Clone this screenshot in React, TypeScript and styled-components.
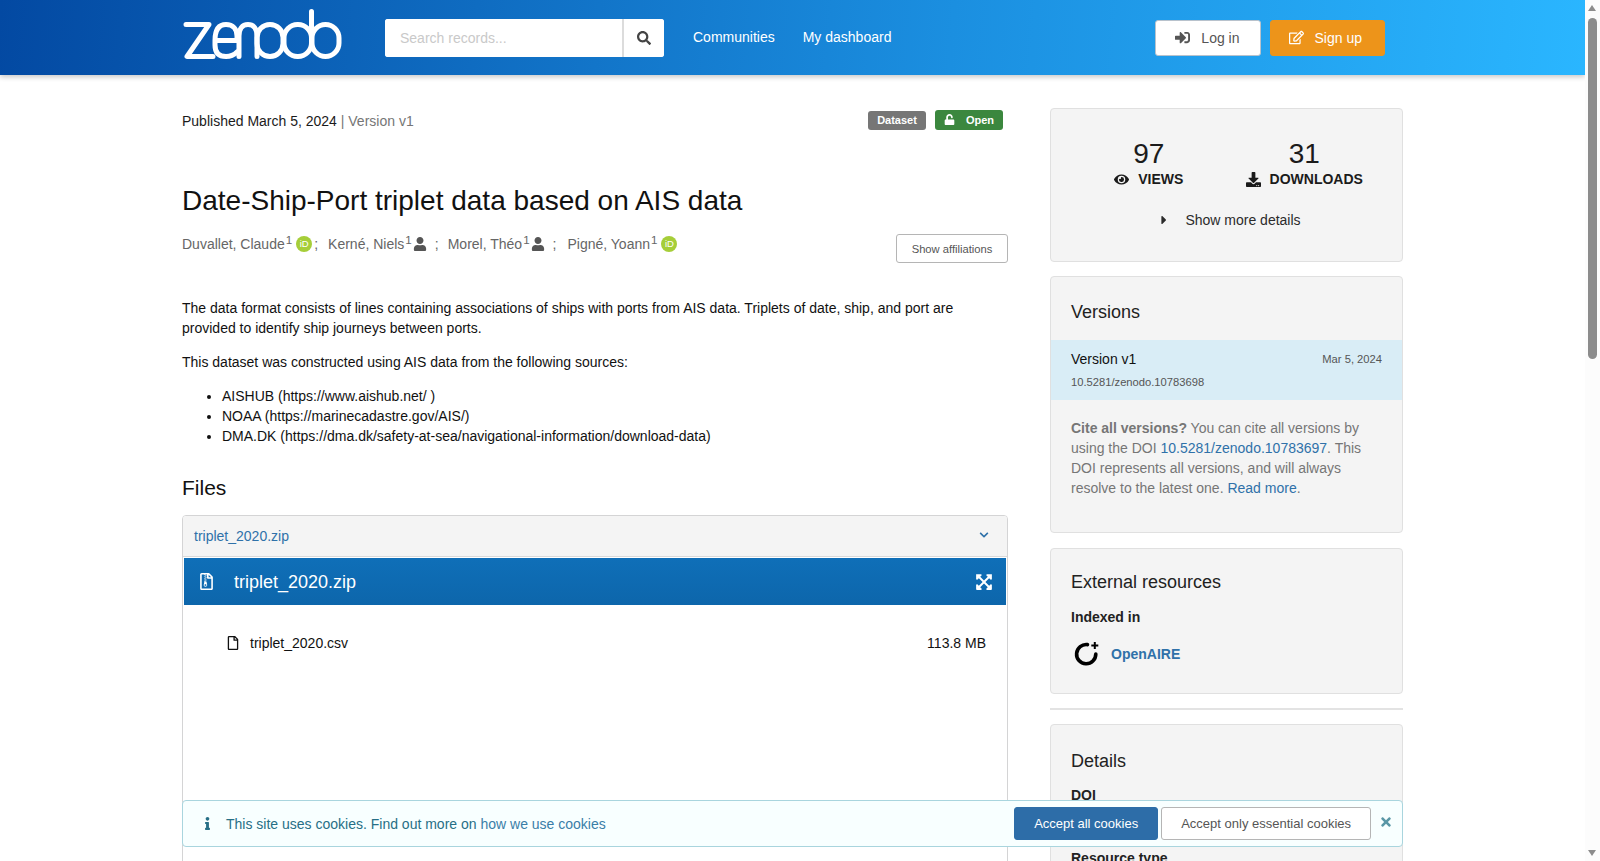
import React from "react";
import styled, { createGlobalStyle } from "styled-components";
import {
  FaCaretRight,
  FaChevronDown,
  FaDownload,
  FaExpandArrowsAlt,
  FaEye,
  FaInfo,
  FaRegEdit,
  FaRegFile,
  FaRegFileArchive,
  FaSearch,
  FaSignInAlt,
  FaTimes,
  FaUnlock,
  FaUser,
} from "react-icons/fa";

const GlobalStyle = createGlobalStyle`
  html, body {
    margin: 0;
    height: 100%;
    overflow: hidden;
    background: #fff;
  }
  body {
    font-family: "Liberation Sans", Arial, sans-serif;
    font-size: 14px;
    line-height: 20px;
    color: #1b1b1b;
  }
  * {
    box-sizing: border-box;
  }
`;

const Viewport = styled.div`
  display: flex;
  height: 861px;
  overflow: hidden;
`;

const Page = styled.div`
  position: relative;
  flex: 1;
  min-width: 0;
  height: 861px;
  overflow: hidden;
`;

const ScrollTrack = styled.div`
  position: relative;
  flex: 0 0 15px;
  display: flex;
  flex-direction: column;
  align-items: center;
  background: #fcfcfc;
`;

const ScrollThumb = styled.div`
  position: absolute;
  top: 18px;
  left: 3px;
  width: 9px;
  height: 341px;
  border-radius: 5px;
  background: #8c8c8c;
`;

const ScrollArrow = styled.div<{ $down?: boolean }>`
  position: absolute;
  left: 3px;
  ${(p) => (p.$down ? "bottom: 5px;" : "top: 5px;")}
  width: 0;
  height: 0;
  border-left: 4.5px solid transparent;
  border-right: 4.5px solid transparent;
  ${(p) =>
    p.$down ? "border-top: 6px solid #8c8c8c;" : "border-bottom: 6px solid #8c8c8c;"}
`;

const Header = styled.header`
  display: flex;
  align-items: center;
  height: 75px;
  padding: 0 200px 0 182px;
  background: linear-gradient(95deg, #0349a2 0%, #1b8fe0 60%, #2ab6ff 100%);
  box-shadow: 0 2px 5px rgba(0, 0, 0, 0.22);
`;

const Logo = styled.svg`
  display: block;
  width: 160px;
  height: 52px;
  margin-top: -6px;
  fill: none;
  stroke: #fff;
  stroke-width: 5;
  stroke-linecap: round;
  stroke-linejoin: round;
`;

const SearchBox = styled.form`
  display: flex;
  width: 279px;
  height: 38px;
  margin-left: 43px;
  border-radius: 3px;
  background: #fff;
  overflow: hidden;
`;

const SearchInput = styled.input`
  flex: 1;
  min-width: 0;
  padding: 0 15px;
  border: none;
  outline: none;
  border-right: 2px solid #dcdcdc;
  font: 14px "Liberation Sans", Arial, sans-serif;
  &::placeholder {
    color: #c9c9c9;
    opacity: 1;
  }
`;

const SearchButton = styled.button`
  display: flex;
  flex: 0 0 40px;
  align-items: center;
  justify-content: center;
  padding: 0;
  border: none;
  background: #fff;
  color: #444;
  font-size: 14px;
`;

const Nav = styled.nav`
  display: flex;
  gap: 28px;
  margin-left: 29px;
  padding-bottom: 2px;
`;

const NavLink = styled.a`
  color: #fff;
  text-decoration: none;
`;

const AuthButtons = styled.div`
  display: flex;
  gap: 9px;
  margin-left: auto;
`;

const AuthButton = styled.button<{ $primary?: boolean }>`
  display: flex;
  align-items: center;
  gap: 11px;
  height: 36px;
  padding: ${(p) => (p.$primary ? "0 22px 0 18px" : "0 20px 0 19px")};
  border: 1px solid ${(p) => (p.$primary ? "#ed941a" : "#b8c2cc")};
  border-radius: 3px;
  background: ${(p) => (p.$primary ? "#ed941a" : "#fff")};
  color: ${(p) => (p.$primary ? "#fff" : "#555")};
  font: 14px "Liberation Sans", Arial, sans-serif;
  svg {
    font-size: 15px;
  }
`;

const Container = styled.div`
  display: grid;
  grid-template-columns: 826px 353px;
  column-gap: 42px;
  padding: 33px 182px 0;
`;

const Main = styled.main`
  min-width: 0;
`;

const MetaRow = styled.div`
  display: flex;
  align-items: center;
  justify-content: space-between;
  height: 26px;
  padding-right: 5px;
`;

const Published = styled.div`
  color: #1b1b1b;
`;

const Muted = styled.span`
  color: #767676;
`;

const Badges = styled.div`
  display: flex;
  align-items: flex-end;
  gap: 9px;
  height: 21px;
  margin-top: -4px;
`;

const Badge = styled.span<{ $green?: boolean }>`
  display: inline-flex;
  align-items: center;
  gap: 11px;
  height: ${(p) => (p.$green ? "20px" : "19px")};
  padding: ${(p) => (p.$green ? "0 9px 0 9px" : "0 9px")};
  border-radius: 3px;
  background: ${(p) => (p.$green ? "#3b873e" : "#767676")};
  color: #fff;
  font-size: 11px;
  font-weight: 700;
  svg {
    font-size: 11px;
  }
`;

const Title = styled.h1`
  margin: 49px 0 15px;
  font-size: 28px;
  font-weight: 400;
  line-height: 36px;
  color: #111;
`;

const CreatorRow = styled.div`
  display: flex;
  align-items: flex-start;
  justify-content: space-between;
`;

const Creators = styled.div`
  display: flex;
  align-items: center;
  height: 20px;
  color: #666;
`;

const Sup = styled.sup`
  margin-left: 1px;
  font-size: 11.6px;
  line-height: 0;
  vertical-align: 4px;
  position: relative;
  top: -4px;
`;

const Orcid = styled.span`
  display: inline-flex;
  align-items: center;
  justify-content: center;
  width: 16px;
  height: 16px;
  margin-left: 4px;
  border-radius: 50%;
  background: #a6ce39;
  color: #fff;
  font-size: 9.5px;
  line-height: 16px;
`;

const Person = styled(FaUser)`
  margin-left: 1px;
  font-size: 14px;
  color: #555;
`;

const Separator = styled.span<{ $before: number; $after: number }>`
  margin: 0 ${(p) => p.$after}px 0 ${(p) => p.$before}px;
`;

const SmallButton = styled.button`
  height: 29px;
  width: 112px;
  padding: 0;
  border: 1px solid #b5b5b5;
  border-radius: 3px;
  background: #fff;
  color: #555;
  font: 11.2px "Liberation Sans", Arial, sans-serif;
`;

const Description = styled.div`
  margin-top: 35px;
  color: #111;
`;

const Paragraph = styled.p`
  margin: 0 0 14px;
`;

const List = styled.ul`
  margin: 0;
  padding-left: 40px;
`;

const SectionTitle = styled.h2`
  margin: 28px 0 14px;
  font-size: 21px;
  font-weight: 400;
  line-height: 27px;
  color: #111;
`;

const FilesBox = styled.section`
  height: 700px;
  border: 1px solid #d4d4d5;
  border-radius: 4px;
  overflow: hidden;
`;

const FilesHead = styled.div`
  display: flex;
  align-items: center;
  justify-content: space-between;
  height: 41px;
  padding: 0 18px 0 11px;
  border-bottom: 1px solid #d9d9d9;
  background: #f4f4f4;
`;

const Link = styled.a<{ $bold?: boolean }>`
  color: #2f71a9;
  font-weight: ${(p) => (p.$bold ? 700 : 400)};
  text-decoration: none;
`;

const Chevron = styled(FaChevronDown)`
  margin-bottom: 3px;
  font-size: 10px;
  color: #2f71a9;
`;

const PreviewBar = styled.div`
  display: flex;
  align-items: center;
  height: 47px;
  margin: 1px 1px 0;
  padding: 0 13px 0 14px;
  background: linear-gradient(#0f6fb8, #0d66ab);
  color: #fff;
  font-size: 18px;
`;

const ZipIcon = styled(FaRegFileArchive)`
  font-size: 17px;
`;

const PreviewName = styled.span`
  flex: 1;
  margin-left: 19px;
`;

const ExpandIcon = styled(FaExpandArrowsAlt)`
  font-size: 18px;
`;

const FileRow = styled.div`
  display: flex;
  align-items: center;
  justify-content: space-between;
  margin-top: 28px;
  padding: 0 21px 0 43px;
  color: #111;
`;

const FileName = styled.span`
  display: flex;
  align-items: center;
  gap: 10px;
  svg {
    font-size: 14px;
  }
`;

const Sidebar = styled.aside`
  min-width: 0;
`;

const Card = styled.section<{ $pad: string; $gap?: number }>`
  margin-bottom: ${(p) => p.$gap ?? 14}px;
  padding: ${(p) => p.$pad};
  border: 1px solid #e0e0e0;
  border-radius: 4px;
  background: #f4f4f4;
`;

const Stats = styled.div`
  display: grid;
  grid-template-columns: 1fr 1fr;
  text-align: center;
`;

const StatNumber = styled.div`
  font-size: 28px;
  line-height: 28px;
  color: #1b1b1b;
`;

const StatLabel = styled.div`
  display: flex;
  align-items: center;
  justify-content: center;
  gap: 9px;
  margin-top: 1px;
  font-weight: 700;
  color: #1b1b1b;
  svg {
    font-size: 15px;
  }
`;

const MoreDetails = styled.div`
  display: flex;
  align-items: center;
  justify-content: center;
  gap: 14px;
  margin-top: 21px;
  padding-left: 5px;
  color: #2b2b2b;
`;

const CardTitle = styled.h3`
  margin: 0 0 ${(p) => p.theme.gap ?? 0}px;
  padding: 0 20px;
  font-size: 18px;
  font-weight: 400;
  line-height: 24px;
  color: #222;
`;

const VersionItem = styled.div`
  margin-top: 16px;
  padding: 9px 20px 11px;
  background: #d9edf6;
`;

const VersionRow = styled.div`
  display: flex;
  align-items: center;
  justify-content: space-between;
`;

const VersionName = styled.span`
  color: #111;
`;

const Tiny = styled.span`
  font-size: 11.2px;
  line-height: 14px;
  color: #555;
`;

const VersionDoi = styled(Tiny)`
  display: block;
  margin-top: 6px;
`;

const CiteNote = styled.p`
  margin: 18px 0 0;
  padding: 0 20px;
  color: #767676;
`;

const CardLabel = styled.div<{ $top: number }>`
  margin-top: ${(p) => p.$top}px;
  padding: 0 20px;
  font-weight: 700;
  color: #222;
`;

const ResourceRow = styled.div`
  display: flex;
  align-items: center;
  gap: 11px;
  margin-top: 14px;
  padding: 0 20px 0 22px;
`;

const OpenAireMark = styled.svg`
  display: block;
  width: 27px;
  height: 25px;
  fill: none;
  stroke: #000;
`;

const Divider = styled.hr`
  height: 2px;
  margin: 0 0 14px;
  border: none;
  background: #e3e3e3;
`;

const DoiValue = styled.div`
  margin-top: 4px;
  padding: 0 20px;
  color: #2f71a9;
`;

const CookieBanner = styled.div`
  position: absolute;
  left: 182px;
  right: 182px;
  bottom: 14px;
  display: flex;
  align-items: center;
  height: 47px;
  padding: 0 9px 0 18px;
  border: 1px solid #a9d5de;
  border-radius: 4px;
  background: #f8ffff;
  color: #276f86;
`;

const InfoIcon = styled(FaInfo)`
  flex: none;
  font-size: 13px;
`;

const CookieText = styled.span`
  flex: 1;
  margin-left: 12px;
`;

const CookieLink = styled.a`
  color: #3a7ea8;
  text-decoration: none;
`;

const CookieButton = styled.button<{ $primary?: boolean }>`
  height: 33px;
  margin-right: 3px;
  padding: 0 19px;
  border: 1px solid ${(p) => (p.$primary ? "#2d6da8" : "#b5b5b5")};
  border-radius: 3px;
  background: ${(p) => (p.$primary ? "#2d6da8" : "#fff")};
  color: ${(p) => (p.$primary ? "#fff" : "#555")};
  font: 13px "Liberation Sans", Arial, sans-serif;
`;

const CloseIcon = styled(FaTimes)`
  flex: none;
  margin: 0 0 4px 5px;
  font-size: 14px;
  color: #5a97a6;
`;

function App() {
  return (
    <Viewport>
      <GlobalStyle />
      <Page>
        <Header>
          <Logo viewBox="0 0 160 52" role="img" aria-label="zenodo">
            <path d="M4 15.5H27L5 47.5H31" />
            <path d="M33 31.5C33 20 37 15.5 44 15.5C51 15.5 55 20 55 27V31.5H33V36C33 44 37 47.5 44 47.5C48 47.5 52 46 55 43" />
            <path d="M57 47.5V27C57 20 60 15.5 66 15.5C72 15.5 75 20 75 27V47.5" />
            <rect x="75" y="15.5" width="26" height="32" rx="13" />
            <rect x="102" y="15.5" width="27.5" height="32" rx="13.5" />
            <path d="M129.5 2.5V36" />
            <rect x="130" y="15.5" width="27" height="32" rx="13.5" />
          </Logo>
          <SearchBox>
            <SearchInput placeholder="Search records..." />
            <SearchButton type="button">
              <FaSearch />
            </SearchButton>
          </SearchBox>
          <Nav>
            <NavLink href="#">Communities</NavLink>
            <NavLink href="#">My dashboard</NavLink>
          </Nav>
          <AuthButtons>
            <AuthButton>
              <FaSignInAlt />
              Log in
            </AuthButton>
            <AuthButton $primary>
              <FaRegEdit />
              Sign up
            </AuthButton>
          </AuthButtons>
        </Header>

        <Container>
          <Main>
            <MetaRow>
              <Published>
                Published March 5, 2024 <Muted>| Version v1</Muted>
              </Published>
              <Badges>
                <Badge>Dataset</Badge>
                <Badge $green>
                  <FaUnlock />
                  Open
                </Badge>
              </Badges>
            </MetaRow>

            <Title>Date-Ship-Port triplet data based on AIS data</Title>

            <CreatorRow>
              <Creators>
                Duvallet, Claude<Sup>1</Sup>
                <Orcid>iD</Orcid>
                <Separator $before={2} $after={10}>;</Separator>
                Kerné, Niels<Sup>1</Sup>
                <Person />
                <Separator $before={8} $after={9}>;</Separator>
                Morel, Théo<Sup>1</Sup>
                <Person />
                <Separator $before={8} $after={11}>;</Separator>
                Pigné, Yoann<Sup>1</Sup>
                <Orcid>iD</Orcid>
              </Creators>
              <SmallButton>Show affiliations</SmallButton>
            </CreatorRow>

            <Description>
              <Paragraph>
                The data format consists of lines containing associations of ships with ports
                from AIS data. Triplets of date, ship, and port are provided to identify ship
                journeys between ports.
              </Paragraph>
              <Paragraph>
                This dataset was constructed using AIS data from the following sources:
              </Paragraph>
              <List>
                <li>AISHUB (https://www.aishub.net/ )</li>
                <li>NOAA (https://marinecadastre.gov/AIS/)</li>
                <li>DMA.DK (https://dma.dk/safety-at-sea/navigational-information/download-data)</li>
              </List>
            </Description>

            <SectionTitle>Files</SectionTitle>
            <FilesBox>
              <FilesHead>
                <Link href="#">triplet_2020.zip</Link>
                <Chevron />
              </FilesHead>
              <PreviewBar>
                <ZipIcon />
                <PreviewName>triplet_2020.zip</PreviewName>
                <ExpandIcon />
              </PreviewBar>
              <FileRow>
                <FileName>
                  <FaRegFile />
                  triplet_2020.csv
                </FileName>
                <span>113.8 MB</span>
              </FileRow>
            </FilesBox>
          </Main>

          <Sidebar>
            <Card $pad="31px 20px">
              <Stats>
                <div>
                  <StatNumber>97</StatNumber>
                  <StatLabel>
                    <FaEye />
                    VIEWS
                  </StatLabel>
                </div>
                <div>
                  <StatNumber>31</StatNumber>
                  <StatLabel>
                    <FaDownload />
                    DOWNLOADS
                  </StatLabel>
                </div>
              </Stats>
              <MoreDetails>
                <FaCaretRight />
                Show more details
              </MoreDetails>
            </Card>

            <Card $pad="23px 0 34px" $gap={15}>
              <CardTitle>Versions</CardTitle>
              <VersionItem>
                <VersionRow>
                  <VersionName>Version v1</VersionName>
                  <Tiny>Mar 5, 2024</Tiny>
                </VersionRow>
                <VersionDoi>10.5281/zenodo.10783698</VersionDoi>
              </VersionItem>
              <CiteNote>
                <strong>Cite all versions?</strong> You can cite all versions by using the DOI{" "}
                <Link href="#">10.5281/zenodo.10783697</Link>. This DOI represents all versions,
                and will always resolve to the latest one. <Link href="#">Read more</Link>.
              </CiteNote>
            </Card>

            <Card $pad="21px 0 27px">
              <CardTitle>External resources</CardTitle>
              <CardLabel $top={13}>Indexed in</CardLabel>
              <ResourceRow>
                <OpenAireMark viewBox="0 0 27 25">
                  <path d="M14.5 3.6A9.6 9.6 0 1 0 22.8 13" strokeWidth="3.6" strokeLinecap="round" />
                  <path d="M21.8 1V8M18.3 4.5H25.3" strokeWidth="2" />
                </OpenAireMark>
                <Link href="#" $bold>OpenAIRE</Link>
              </ResourceRow>
            </Card>

            <Divider />

            <Card $pad="24px 0 30px">
              <CardTitle>Details</CardTitle>
              <CardLabel $top={12}>DOI</CardLabel>
              <DoiValue>10.5281/zenodo.10783698</DoiValue>
              <CardLabel $top={19}>Resource type</CardLabel>
            </Card>
          </Sidebar>
        </Container>

        <CookieBanner>
          <InfoIcon />
          <CookieText>
            This site uses cookies. Find out more on{" "}
            <CookieLink href="#">how we use cookies</CookieLink>
          </CookieText>
          <CookieButton $primary>Accept all cookies</CookieButton>
          <CookieButton>Accept only essential cookies</CookieButton>
          <CloseIcon />
        </CookieBanner>
      </Page>
      <ScrollTrack>
        <ScrollArrow />
        <ScrollThumb />
        <ScrollArrow $down />
      </ScrollTrack>
    </Viewport>
  );
}

export default App;
